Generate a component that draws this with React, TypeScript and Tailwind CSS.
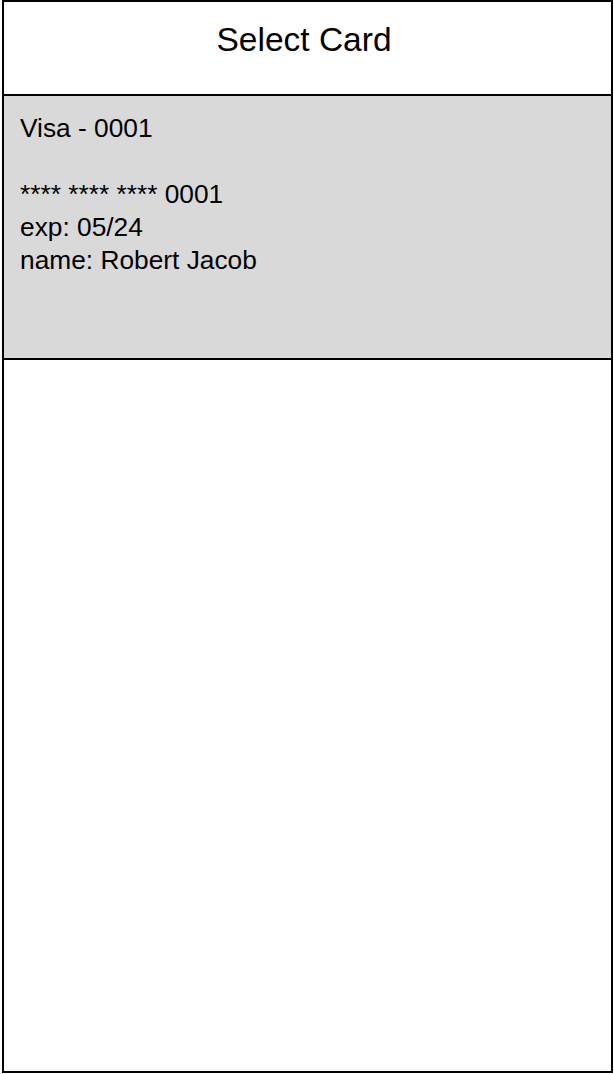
const card = {
  title: "Visa - 0001",
  number: "**** **** **** 0001",
  exp: "05/24",
  name: "Robert Jacob",
}

export default function App() {
  return (
    <div className="w-[614px] h-[1074px] bg-white pl-[2px] pr-[1px] font-['Liberation_Sans',Arial,sans-serif] text-black">
      <div className="flex h-[1073px] flex-col border-2 border-black">
        <header className="flex h-[94px] shrink-0 items-center justify-center border-b-2 border-black pb-[16px] pr-[7px]">
          <h1 className="text-[33.5px] leading-none">Select Card</h1>
        </header>
        <div className="h-[264px] shrink-0 border-b-2 border-black bg-[#d9d9d9] px-[16px] pt-[16px] text-[26.3px] leading-[33px]">
          <p>{card.title}</p>
          <p className="mt-[33px]">{card.number}</p>
          <p>exp: {card.exp}</p>
          <p>name: {card.name}</p>
        </div>
        <div className="flex-1" />
      </div>
    </div>
  )
}
